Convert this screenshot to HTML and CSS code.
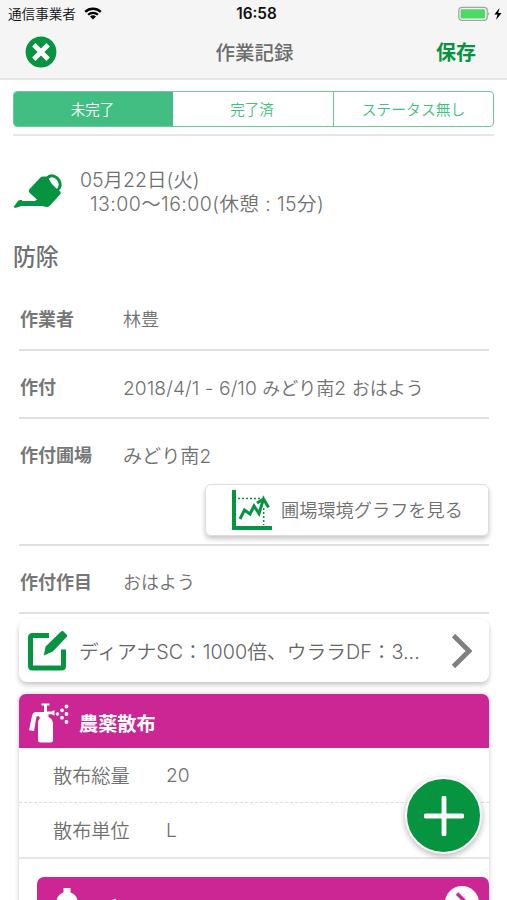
FILE: index.html
```html
<!DOCTYPE html>
<html lang="ja">
<head>
<meta charset="utf-8">
<meta name="viewport" content="width=device-width, initial-scale=1">
<title>作業記録</title>
<link rel="stylesheet" href="styles.css">
</head>
<body>
<div class="screen">
  <header class="top">
    <div class="status">
      <div class="carrier"><span>通信事業者</span>
        <svg class="wifi" viewBox="0 0 18 13"><path d="M1.2 4.9a11.2 11.2 0 0 1 15.6 0M4.1 7.8a7 7 0 0 1 9.8 0" fill="none" stroke="#000" stroke-width="2.3"/><path d="M9 12.6 6 9.6a4.3 4.3 0 0 1 6 0z"/></svg>
      </div>
      <div class="time">16:58</div>
      <svg class="battery" viewBox="0 0 44 16"><rect x=".8" y="1.3" width="28.4" height="13" rx="3" fill="#f5f5f5" stroke="#a5a5a5" stroke-width="1.3"/><rect x="2.6" y="3.2" width="24.4" height="9.2" rx="1" fill="#4cd964"/><path d="M30.3 5.5q2 2.2 0 4.4z" fill="#a5a5a5"/><path d="M41.6 1.900 36.300 8.600h3.200l-1.500 5.500 5.600-7h-3.400z"/></svg>
    </div>
    <nav class="bar">
      <svg class="close" viewBox="0 0 32 32"><circle cx="16" cy="16" r="15.4" fill="#069440"/><path d="m8.8 8.8 14.4 14.4M23.2 8.8 8.8 23.2" stroke="#fff" stroke-width="4.8"/></svg>
      <h1 class="title">作業記録</h1>
      <span class="save">保存</span>
    </nav>
  </header>
  <div class="filter">
    <div class="segments">
      <span class="segment active">未完了</span>
      <span class="segment">完了済</span>
      <span class="segment">ステータス無し</span>
    </div>
  </div>
  <section class="when">
    <svg class="can" viewBox="0 0 50 36"><ellipse cx="40" cy="9.600" rx="6.800" ry="8" transform="rotate(-30 40 9.600)" fill="none" stroke="#069440" stroke-width="3"/><path d="M1.300 32 4.800 27.300q1-1.200 2.600-1.200h2l-.5.900H22L24 25.500 17 19.200q-2.200-2-.4-4.200L27.200 3.800q1.600-1.600 3.800-1.200L34.500 2.600 38.500 9.500l5.500 5.500 3.300 2.500q1 1.500-.2 3L36.500 32q-2 1.800-4 .8l-3.500-.9H8.500L3 33.700q-3.500.2-1.700-1.700z" fill="#069440"/></svg>
    <p class="dates">05月22日(火)<br><span class="hours">13:00〜16:00(休憩 : 15分)</span></p>
  </section>
  <h2 class="kind">防除</h2>
  <dl class="details">
    <div class="row"><dt>作業者</dt><dd>林豊</dd></div>
    <div class="row"><dt>作付</dt><dd><span class="latin">2018/4/1 - 6/10 </span>みどり南<span class="latin">2 </span>おはよう</dd></div>
    <div class="row field"><dt>作付圃場</dt><dd class="place">みどり南2</dd>
      <div class="graph-button">
        <svg class="graph" viewBox="0 0 40 40"><g fill="none" stroke="#069440"><path d="M2 0v38h38" stroke-width="4"/><path d="m8 29 4.500-9 5.500 4 4-8 5 7.500L31.500 9l5 8.500M25 13 31.500 9" stroke-width="3"/><path d="M6 8.500h23M31.700 18v17" stroke-width="1.500" stroke-dasharray="2 2"/></g></svg>
        <span>圃場環境グラフを見る</span>
      </div>
    </div>
    <div class="row"><dt>作付作目</dt><dd>おはよう</dd></div>
  </dl>
  <div class="memo">
    <svg class="edit" viewBox="0 0 40 40"><path d="M21 4.500H4.500q-2 0-2 2v28.500q0 2 2 2h29q2 0 2-2V18.500" fill="none" stroke="#069440" stroke-width="5"/><path d="m32 1.500 1.500-1.300q1-.7 2 .2l3.300 3.300q.9 1 0 2.100L24.800 20.400l-9 4 1.800-9z" fill="#069440"/></svg>
    <span class="memo-text">ディアナSC：1000倍、ウララDF：3...</span>
    <svg class="chevron" viewBox="0 0 20 34"><path d="m1.500 1.500 15.500 15.500L1.500 32.500" fill="none" stroke="#808080" stroke-width="4.800"/></svg>
  </div>
  <section class="spray">
    <h3 class="spray-head">
      <svg class="sprayer" viewBox="0 0 40 40"><g fill="#fff"><path d="M12.500.500h8v2H18v6h4.500l3-1.500v5.500l-3-1.200h-3v2.700q4.500 2 4.500 7v16q0 2.500-2.500 2.500h-10q-2.500 0-2.500-2.500V21q0-4 2-6l-1.500-2-2 .5L5 28l-5-.8L3 13q.8-4 4-4h8V2.500h-2.500z"/><circle cx="28.500" cy="11" r="1.800"/><circle cx="33" cy="7.300" r="1.900"/><circle cx="33" cy="14.700" r="1.900"/><circle cx="37.500" cy="3.500" r="1.900"/><circle cx="37.500" cy="11" r="1.900"/><circle cx="37.500" cy="19" r="1.900"/></g></svg>
      <span>農薬散布</span>
    </h3>
    <div class="amount"><span>散布総量</span><span>20</span></div>
    <div class="amount last"><span>散布単位</span><span>L</span></div>
    <div class="chemical">
      <svg class="bottle" viewBox="0 0 22 34"><path d="M7.500 0h7v4.500q7 2.500 7 9.500v20H.5V14q0-7 7-9.500z" fill="#fff"/></svg>
      <span class="chemical-name">ディアナ</span>
      <svg class="more" viewBox="0 0 34 34"><circle cx="17" cy="17" r="17" fill="#fff"/><path d="m12 7.500 9.500 9.500-9.500 9.500" fill="none" stroke="#cb2693" stroke-width="3.500"/></svg>
    </div>
  </section>
  <div class="add"><svg viewBox="0 0 40 40"><path d="M20 2v36M2 20h36" stroke="#fff" stroke-width="4.800" stroke-linecap="round"/></svg></div>
</div>
</body>
</html>
```
FILE: styles.css
```css
* { box-sizing: border-box; margin: 0; padding: 0; }
body { background: #fff; }
.screen {
  position: relative;
  width: 507px;
  height: 900px;
  overflow: hidden;
  background: #fff;
  color: #707070;
  font-family: Inter, "Noto Sans CJK JP", sans-serif;
  font-weight: 350;
  font-size: 18px;
  white-space: nowrap;
}
svg { display: block; flex: none; }
.top { height: 80px; background: #f5f5f5; border-bottom: 2px solid #e6e6e6; }
.status {
  height: 27px;
  padding: 0 5px 0 8px;
  display: grid;
  grid-template-columns: 1fr auto 1fr;
  align-items: center;
  color: #111;
}
.carrier { display: flex; align-items: center; gap: 8px; font-size: 13.6px; line-height: 18px; }
.wifi { width: 18px; height: 13px; }
.time { font-size: 15.300px; font-weight: 600; margin-left: 3px; }
.battery { width: 44px; height: 16px; justify-self: end; }
.bar {
  height: 50px;
  padding: 0 31px 0 25px;
  display: grid;
  grid-template-columns: 1fr auto 1fr;
  align-items: center;
}
.close { width: 32px; height: 32px; }
.title { margin: -2px 0 0 8px; font-size: 19.500px; font-weight: 500; color: #6c6c6c; }
.save { margin-top: -2px; justify-self: end; font-size: 20px; font-weight: 700; color: #069440; }
.filter { margin: 11px 13px 0 13px; height: 45px; border-bottom: 2px solid #e6e6e6; }
.segments {
  height: 36px;
  display: grid;
  grid-template-columns: 159px 160px 1fr;
  border: 1px solid #6cc99c;
  border-radius: 4px;
  overflow: hidden;
}
.segment {
  display: flex;
  align-items: center;
  justify-content: center;
  padding: 0 2px 2px 0;
  font-size: 14.500px;
  color: #42be82;
}
.segment + .segment + .segment { padding-right: 0; border-left: 1px solid #6cc99c; font-size: 14.800px; }
.segment.active { background: #42be82; color: #fff; }
.when { display: flex; padding: 32px 13px 0; }
.can { width: 50px; height: 36px; margin-top: 6px; }
.dates { margin-left: 17px; font-size: 19.500px; line-height: 24px; }
.hours { margin-left: 10px; letter-spacing: .42px; }
.kind { margin: 25px 13px 0; font-size: 22.800px; line-height: 32px; font-weight: 500; }
.details { margin: 16px 18px 0 19px; }
.row {
  display: grid;
  grid-template-columns: 104px 1fr;
  height: 68px;
  padding-top: 24px;
  line-height: 26px;
  border-bottom: 2px solid #e0e0e0;
}
.row:first-child { height: 62px; padding-top: 18px; }
.row dt { padding-left: 1px; font-weight: 600; color: #777; }
.row.field { height: 127px; padding-top: 24px; }
.latin { font-size: 19.200px; letter-spacing: .06px; }
.place { font-size: 19.100px; }
.graph-button {
  grid-column: 1 / -1;
  justify-self: end;
  width: 284px;
  height: 52px;
  margin-top: 7px;
  padding: 0 0 1px 26px;
  display: flex;
  align-items: center;
  border: 1px solid #ddd;
  border-radius: 6px;
  box-shadow: 0 3px 5px rgba(0, 0, 0, .22);
  font-size: 18.200px;
}
.graph { width: 40px; height: 40px; margin-right: 9px; }
.memo {
  height: 63px;
  margin: 5px 18px 0 19px;
  padding: 0 17px 0 9px;
  display: flex;
  align-items: center;
  border-radius: 8px;
  box-shadow: 0 3px 5px rgba(0, 0, 0, .22);
  color: #666;
}
.edit { width: 40px; height: 40px; }
.memo-text { margin-left: 11px; font-size: 19.750px; }
.chevron { width: 20px; height: 34px; margin-left: auto; }
.spray {
  height: 230px;
  margin: 12px 18px 0 19px;
  border-radius: 7px 7px 0 0;
  box-shadow: 0 0 4px rgba(0, 0, 0, .22);
}
.spray-head {
  height: 54px;
  padding: 4px 10px 0;
  display: flex;
  align-items: center;
  gap: 10px;
  background: #cb2693;
  color: #fff;
  border-radius: 7px 7px 0 0;
  font-size: 19.200px;
  font-weight: 700;
}
.sprayer { width: 40px; height: 40px; }
.amount {
  height: 55px;
  padding-left: 34px;
  display: grid;
  grid-template-columns: 113px 1fr;
  align-items: center;
  font-size: 19.200px;
  border-bottom: 1px dashed #ddd;
}
.amount.last { height: 56px; border-bottom: 2px solid #e6e6e6; }
.chemical {
  height: 54px;
  margin: 18px 0 0 18px;
  padding: 11px 10px 0 19px;
  display: flex;
  background: #cb2693;
  color: #fff;
  border-radius: 7px 7px 0 0;
}
.bottle { width: 22px; height: 34px; }
.chemical-name { margin: 5px 0 0 20px; font-size: 19px; font-weight: 700; line-height: 34px; }
.more { width: 34px; height: 34px; margin-left: auto; margin-top: -2px; }
.add {
  position: absolute;
  left: 405px;
  top: 777px;
  width: 77px;
  height: 77px;
  display: flex;
  align-items: center;
  justify-content: center;
  background: #069440;
  border: 2px solid #fff;
  border-radius: 50%;
  box-shadow: 0 2px 6px rgba(0, 0, 0, .3);
}
.add svg { width: 40px; height: 40px; }
```
